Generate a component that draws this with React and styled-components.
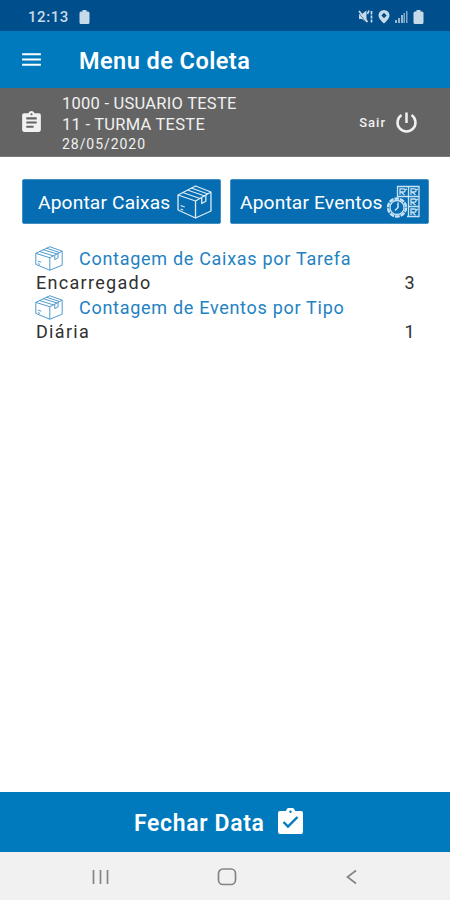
import React from "react";
import styled, { createGlobalStyle } from "styled-components";
import { MdMenu, MdAssignment } from "react-icons/md";

const GlobalStyle = createGlobalStyle`
  * {
    box-sizing: border-box;
  }
  body {
    margin: 0;
    background: #fff;
    font-family: Roboto, "Liberation Sans", sans-serif;
  }
`;

const Screen = styled.div`
  display: flex;
  flex-direction: column;
  width: 450px;
  height: 900px;
  overflow: hidden;
  background: #fff;
`;

const StatusBar = styled.div`
  display: flex;
  align-items: center;
  flex: 0 0 31px;
  padding: 2px 26px 0 28px;
  background: #004f8c;
  color: #c6dbea;
`;

const Clock = styled.span`
  width: 51px;
  font-size: 15px;
  font-weight: 500;
  letter-spacing: 0.55px;
  white-space: nowrap;
`;

const StatusIcons = styled.div`
  display: flex;
  align-items: center;
  gap: 5px;
  margin-left: auto;
`;

const AppBar = styled.header`
  display: flex;
  align-items: center;
  flex: 0 0 57px;
  padding: 0 19px;
  background: #007abd;
  color: #fff;
`;

const Title = styled.h1`
  margin: 3px 0 0 35px;
  font-size: 23.5px;
  font-weight: 600;
  letter-spacing: 0.45px;
  white-space: nowrap;
`;

const UserBar = styled.section`
  display: flex;
  align-items: center;
  flex: 0 0 69px;
  padding: 0 31px 0 19px;
  background: #646464;
  border-bottom: 1px solid #7b7b7b;
  color: #f1f1f1;
`;

const UserInfo = styled.div`
  margin-left: 18px;
  padding-top: 1px;
`;

const UserLine = styled.div`
  height: ${(props) => (props.$small ? 18 : 21)}px;
  line-height: ${(props) => (props.$small ? 18 : 21)}px;
  font-size: ${(props) => (props.$small ? 14 : 16.5)}px;
  letter-spacing: ${(props) => props.$spacing}px;
  white-space: nowrap;
`;

const Logout = styled.div`
  display: flex;
  align-items: center;
  margin-left: auto;
  font-size: 13px;
  font-weight: 500;
  letter-spacing: 1px;

  svg {
    margin-left: 8px;
  }
`;

const Content = styled.main`
  flex: 1;
  padding: 22px 21px 0 22px;
`;

const Actions = styled.div`
  display: flex;
  gap: 9px;
`;

const ActionButton = styled.button`
  display: flex;
  align-items: center;
  justify-content: space-between;
  width: 199px;
  height: 45px;
  padding: ${(props) => (props.$wide ? "1px 8px 0 9px" : "1px 8px 0 15px")};
  border: 1px solid #428fc4;
  border-radius: 2px;
  background: #066db3;
  color: #fff;
  font-family: inherit;
  font-size: 19.2px;
  letter-spacing: ${(props) => props.$spacing}px;
  white-space: nowrap;

  svg {
    flex: none;
  }
`;

const Summary = styled.div`
  padding: 22px 13px 0 13px;
`;

const SummaryTitle = styled.div`
  display: flex;
  align-items: center;
  height: 25px;
  color: #2382c2;
  font-size: 18px;
  letter-spacing: ${(props) => props.$spacing}px;
  white-space: nowrap;

  svg {
    margin-right: 16px;
  }
`;

const SummaryRow = styled.div`
  display: flex;
  justify-content: space-between;
  height: 24px;
  padding-left: 1px;
  line-height: 24px;
  color: #303030;
  font-size: 18px;
  letter-spacing: ${(props) => props.$spacing}px;
`;

const CloseButton = styled.button`
  display: flex;
  align-items: center;
  flex: 0 0 60px;
  padding: 3px 0 0 134px;
  border: 0;
  background: #007abd;
  color: #fff;
  font-family: inherit;
  font-size: 23px;
  font-weight: 600;
  letter-spacing: 0.65px;
  white-space: nowrap;

  svg {
    margin: -5px 0 0 12px;
  }
`;

const NavBar = styled.nav`
  display: flex;
  align-items: center;
  justify-content: space-between;
  flex: 0 0 48px;
  padding: 2px 88px 0 91px;
  background: #f1f1f1;
`;

const BoxIcon = ({ width, height, stroke = 1.2 }) => (
  <svg
    width={width}
    height={height}
    viewBox="0 0 34 34"
    preserveAspectRatio="none"
    fill="none"
    stroke="currentColor"
    strokeWidth={stroke}
    strokeLinejoin="round"
    opacity="0.85"
  >
    <path d="M1 10 18 1 33 7v19L18 33 1 25ZM1 10l17 6 15-9M18 16v17" />
    <path d="m5.500 7.500 17 6M10 5l17 6M14 3l16 6M24 12.500v6l4-2.300v-6" />
    <path d="m3.500 20.500 4 1.500M3.500 24l2.500 1" />
  </svg>
);

// one printed mark on a card of the events icon
const CardMark = ({ x, y }) => (
  <g transform={`translate(${x} ${y})`}>
    <path d="M1 7V1h3.500a1.600 1.600 0 0 1 0 3.200H2l3.500 3M6.500 1.500H8" />
  </g>
);

const EventsIcon = () => (
  <svg
    width="34"
    height="34"
    viewBox="0 0 34 34"
    fill="none"
    stroke="#c9e3f4"
    strokeWidth="1.300"
  >
    <path d="M11.500 14V1.500h21.500v30H21M22.500 1.500v30M11.500 11.500H33M22.500 21.500H33" />
    <CardMark x={13} y={2.8} />
    <CardMark x={24} y={2.8} />
    <CardMark x={24} y={13} />
    <CardMark x={24} y={23} />
    <circle cx="11" cy="22.500" r="10.500" fill="#066db3" stroke="none" />
    <circle cx="11" cy="22.500" r="9" strokeWidth="2.400" strokeDasharray="4.700 0.950" />
    <circle cx="11" cy="22.500" r="7" />
    <path d="M12 17.500v5L9 25.500" strokeWidth="1.600" />
  </svg>
);

const PowerIcon = () => (
  <svg width="25" height="25" viewBox="0 0 25 25" fill="none" stroke="currentColor" strokeWidth="2.500">
    <path d="M12.500 2.500v10.500M7.500 5A9 9 0 1 0 17.500 5" />
  </svg>
);

const BatteryIcon = () => (
  <svg width="11" height="14" viewBox="0 0 11 14" fill="currentColor">
    <path d="M3.500 0h4v1.500H9a1.500 1.500 0 0 1 1.500 1.500v9.500a1.500 1.500 0 0 1-1.500 1.500H2A1.500 1.500 0 0 1 .5 12.500V3A1.500 1.500 0 0 1 2 1.500h1.500Z" />
  </svg>
);

const MutedIcon = () => (
  <svg width="15" height="13" viewBox="0 0 15 13">
    <path d="M1 4h3l4.500-3.500v12L4 9H1Z" fill="currentColor" />
    <path d="M.5 2.500 8 12" stroke="#004f8c" strokeWidth="0.700" />
    <path
      d="M1 1l8.500 11M9.500 4 11 .5M13.500 1v3.500M13.500 5.500v3M13.500 9.500v3"
      fill="none"
      stroke="currentColor"
      strokeWidth="1.700"
    />
  </svg>
);

const LocationIcon = () => (
  <svg width="12" height="14" viewBox="0 0 12 14" fill="currentColor">
    <path
      fillRule="evenodd"
      d="M6 0a5.500 5.500 0 0 1 5.500 5.500C11.500 9 6 13.500 6 13.500S.5 9 .5 5.500A5.500 5.500 0 0 1 6 0Zm0 2.800-2.700 2.700L6 8.200l2.700-2.700Z"
    />
  </svg>
);

const SignalIcon = () => (
  <svg width="13" height="13" viewBox="0 0 13 13" fill="currentColor">
    <path d="M0 10h2v3H0ZM3 8h2v5H3ZM6 5h2v8H6Z" opacity="0.75" />
    <path d="M8.500 3h1.500v10H8.500ZM11 1h1.500v12H11Z" opacity="0.65" />
  </svg>
);

const DoneIcon = () => (
  <svg width="27" height="27" viewBox="0 0 27 27">
    <path
      d="M3 3h6a4.600 4.600 0 0 1 9 0h6a2 2 0 0 1 2 2v19a2 2 0 0 1-2 2H3a2 2 0 0 1-2-2V5a2 2 0 0 1 2-2Z"
      fill="#fff"
    />
    <circle cx="13.500" cy="3.800" r="1.200" fill="#007abd" />
    <path d="m6.500 14 4.500 4.500L20.500 9" fill="none" stroke="#007abd" strokeWidth="2.400" />
  </svg>
);

const NavIcon = ({ children }) => (
  <svg width="20" height="18" viewBox="0 0 20 18" fill="none" stroke="#858585" strokeWidth="1.700">
    {children}
  </svg>
);

export default function App() {
  return (
    <Screen>
      <GlobalStyle />
      <StatusBar>
        <Clock>12:13</Clock>
        <BatteryIcon />
        <StatusIcons>
          <MutedIcon />
          <LocationIcon />
          <SignalIcon />
          <BatteryIcon />
        </StatusIcons>
      </StatusBar>
      <AppBar>
        <MdMenu size={25} />
        <Title>Menu de Coleta</Title>
      </AppBar>
      <UserBar>
        <MdAssignment size={25} />
        <UserInfo>
          <UserLine $spacing={0.25}>1000 - USUARIO TESTE</UserLine>
          <UserLine $spacing={0.25}>11 - TURMA TESTE</UserLine>
          <UserLine $small $spacing={0.95}>28/05/2020</UserLine>
        </UserInfo>
        <Logout>
          Sair
          <PowerIcon />
        </Logout>
      </UserBar>
      <Content>
        <Actions>
          <ActionButton $spacing={0.15}>
            Apontar Caixas
            <BoxIcon width={35} height={34} stroke={1.3} />
          </ActionButton>
          <ActionButton $wide $spacing={0.15}>
            Apontar Eventos
            <EventsIcon />
          </ActionButton>
        </Actions>
        <Summary>
          <SummaryTitle $spacing={0.71}>
            <BoxIcon width={28} height={25} />
            Contagem de Caixas por Tarefa
          </SummaryTitle>
          <SummaryRow $spacing={1.3}>
            <span>Encarregado</span>
            <span>3</span>
          </SummaryRow>
          <SummaryTitle $spacing={0.71}>
            <BoxIcon width={28} height={25} />
            Contagem de Eventos por Tipo
          </SummaryTitle>
          <SummaryRow $spacing={1.3}>
            <span>Diária</span>
            <span>1</span>
          </SummaryRow>
        </Summary>
      </Content>
      <CloseButton>
        Fechar Data
        <DoneIcon />
      </CloseButton>
      <NavBar>
        <NavIcon>
          <path d="M2.500 2v14M9.500 2v14M16.500 2v14" />
        </NavIcon>
        <NavIcon>
          <rect x="1.500" y="1" width="17" height="15.500" rx="4.500" />
        </NavIcon>
        <NavIcon>
          <path d="M14 2.500 5.500 9l8.500 6.500" />
        </NavIcon>
      </NavBar>
    </Screen>
  );
}
